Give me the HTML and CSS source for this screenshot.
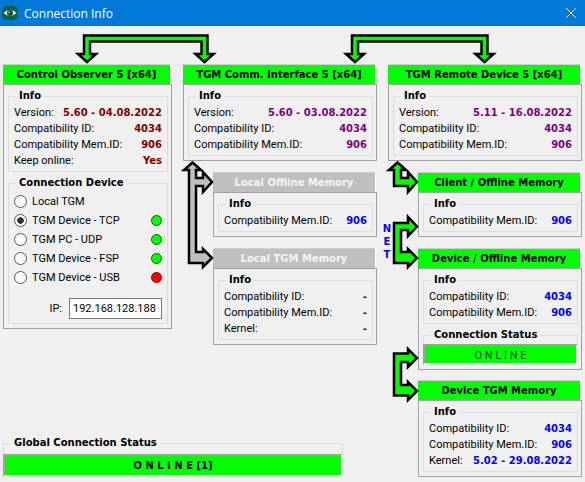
FILE: index.html
```html
<!DOCTYPE html>
<html lang="en">

<head>
    <meta charset="UTF-8">
    <meta name="viewport" content="width=device-width, initial-scale=1.0">
    <title>Connection Info</title>
    <link rel="stylesheet" href="styles.css">
</head>

<body>

    <div class="window">
        <div class="titlebar">
            <svg class="app-icon" width="16" height="14" viewBox="0 0 16 14">
                <rect x="0" y="0" width="16" height="14" rx="5" fill="#0f5f45" />
                <path d="M1.5 7 Q8 1 14.5 7 Q8 13 1.5 7 Z" fill="#fff" />
                <circle cx="8" cy="7" r="3" fill="#0f4f3c" />
                <circle cx="7.2" cy="6.2" r="0.8" fill="#cfe8df" />
            </svg>
            <span class="title-text">Connection Info</span>
            <svg class="close-icon" width="10" height="10" viewBox="0 0 10 10">
                <path d="M0 0 L10 10 M10 0 L0 10" stroke="#fff" stroke-width="1" fill="none" />
            </svg>
        </div>

        <div class="content">
            <div class="left">
                <div class="top-row">
                    <!-- Control Observer -->
                    <div class="col col-observer">
                        <h2 class="header">Control Observer 5 [x64]</h2>
                        <div class="panel">
                            <fieldset class="group">
                                <legend>Info</legend>
                                <div class="row"><span>Version:</span><b class="maroon">5.60 - 04.08.2022</b></div>
                                <div class="row"><span>Compatibility ID:</span><b class="maroon">4034</b></div>
                                <div class="row"><span>Compatibility Mem.ID:</span><b class="maroon">906</b></div>
                                <div class="row"><span>Keep online:</span><b class="maroon">Yes</b></div>
                            </fieldset>
                            <fieldset class="group device-group">
                                <legend>Connection Device</legend>
                                <label class="radio-row"><input type="radio" name="device"><span>Local TGM</span></label>
                                <label class="radio-row"><input type="radio" name="device" checked><span>TGM Device - TCP</span><i class="led"></i></label>
                                <label class="radio-row"><input type="radio" name="device"><span>TGM PC - UDP</span><i class="led"></i></label>
                                <label class="radio-row"><input type="radio" name="device"><span>TGM Device - FSP</span><i class="led"></i></label>
                                <label class="radio-row"><input type="radio" name="device"><span>TGM Device - USB</span><i class="led led-red"></i></label>
                                <div class="ip-row"><span>IP:</span><input class="ip-input" type="text" value="192.168.128.188"></div>
                            </fieldset>
                        </div>
                    </div>

                    <!-- TGM Comm. Interface -->
                    <div class="col">
                        <h2 class="header">TGM Comm. Interface 5 [x64]</h2>
                        <div class="panel">
                            <fieldset class="group">
                                <legend>Info</legend>
                                <div class="row"><span>Version:</span><b class="purple">5.60 - 03.08.2022</b></div>
                                <div class="row"><span>Compatibility ID:</span><b class="purple">4034</b></div>
                                <div class="row"><span>Compatibility Mem.ID:</span><b class="purple">906</b></div>
                            </fieldset>
                        </div>
                        <div class="sub">
                            <h2 class="header header-off">Local Offline Memory</h2>
                            <div class="panel">
                                <fieldset class="group">
                                    <legend>Info</legend>
                                    <div class="row"><span>Compatibility Mem.ID:</span><b class="blue">906</b></div>
                                </fieldset>
                            </div>
                        </div>
                        <div class="sub">
                            <h2 class="header header-off">Local TGM Memory</h2>
                            <div class="panel">
                                <fieldset class="group">
                                    <legend>Info</legend>
                                    <div class="row"><span>Compatibility ID:</span><b class="blue">-</b></div>
                                    <div class="row"><span>Compatibility Mem.ID:</span><b class="blue">-</b></div>
                                    <div class="row"><span>Kernel:</span><b class="blue">-</b></div>
                                </fieldset>
                            </div>
                        </div>
                    </div>
                </div>

                <fieldset class="group global-group">
                    <legend>Global Connection Status</legend>
                    <div class="status status-global">O N L I N E [1]</div>
                </fieldset>
            </div>

            <!-- TGM Remote Device -->
            <div class="col">
                <h2 class="header">TGM Remote Device 5 [x64]</h2>
                <div class="panel">
                    <fieldset class="group">
                        <legend>Info</legend>
                        <div class="row"><span>Version:</span><b class="purple">5.11 - 16.08.2022</b></div>
                        <div class="row"><span>Compatibility ID:</span><b class="purple">4034</b></div>
                        <div class="row"><span>Compatibility Mem.ID:</span><b class="purple">906</b></div>
                    </fieldset>
                </div>
                <div class="sub">
                    <h2 class="header">Client / Offline Memory</h2>
                    <div class="panel">
                        <fieldset class="group">
                            <legend>Info</legend>
                            <div class="row"><span>Compatibility Mem.ID:</span><b class="blue">906</b></div>
                        </fieldset>
                    </div>
                </div>
                <div class="sub">
                    <h2 class="header">Device / Offline Memory</h2>
                    <div class="panel">
                        <fieldset class="group">
                            <legend>Info</legend>
                            <div class="row"><span>Compatibility ID:</span><b class="blue">4034</b></div>
                            <div class="row"><span>Compatibility Mem.ID:</span><b class="blue">906</b></div>
                        </fieldset>
                        <fieldset class="group status-group">
                            <legend>Connection Status</legend>
                            <div class="status">O N L I N E</div>
                        </fieldset>
                    </div>
                </div>
                <div class="sub sub-last">
                    <h2 class="header">Device TGM Memory</h2>
                    <div class="panel">
                        <fieldset class="group">
                            <legend>Info</legend>
                            <div class="row"><span>Compatibility ID:</span><b class="blue">4034</b></div>
                            <div class="row"><span>Compatibility Mem.ID:</span><b class="blue">906</b></div>
                            <div class="row"><span>Kernel:</span><b class="blue">5.02 - 29.08.2022</b></div>
                        </fieldset>
                    </div>
                </div>
            </div>
        </div>

        <!-- connector arrows lie over the panels -->
        <svg class="arrows" width="585" height="482" viewBox="0 0 585 482">
            <g fill="#00ff00" stroke="#000" stroke-width="2.5" stroke-miterlimit="10">
                <polygon points="84,54 84,35.5 207.5,35.5 207.5,54 213.5,54 204.5,62 195.5,54 201.5,54 201.5,41.5 90,41.5 90,54 96,54 87,62 78,54" />
                <polygon points="352,54 352,35.5 487.5,35.5 487.5,54 493.5,54 484.5,62 475.5,54 481.5,54 481.5,41.5 358,41.5 358,54 364,54 355,62 346,54" />
                <polygon points="397.5,162.5 406,170 401,170 401,178 408,178 408,172 417,182 408,192 408,186 394,186 394,170 389,170" />
                <polygon points="394,223 408,223 408,217 417,226.5 408,236 408,230 401,230 401,252 408,252 408,249 417,258 408,267 408,263 394,263" />
                <polygon points="394,353.5 408,353.5 408,349 417,358 408,367 408,362 401,362 401,385 408,385 408,382 417,391 408,400 408,395.5 394,395.5" />
            </g>
            <polygon fill="#c0c0c0" stroke="#000" stroke-width="2.5" stroke-miterlimit="10"
                points="192.5,162.5 201,170 196,170 196,178 203,178 203,172 212,182 203,192 203,186 196,186 196,252 203,252 203,249 212,258 203,267 203,263 189,263 189,170 184,170" />
        </svg>
        <div class="net"><span>N</span><span>E</span><span>T</span></div>
    </div>

</body>

</html>
```

FILE: styles.css
```css
body {
    font-family: Roboto, Arial, sans-serif;
    font-size: 11px;
    margin: 0;
    padding: 0;
    background-color: #f0f0f0;
    color: #000;
}

b,
.header,
.group legend,
.status-global,
.net {
    font-family: "DejaVu Sans", Verdana, sans-serif;
    font-size: 10px;
    font-weight: bold;
}

.window {
    position: relative;
    width: 585px;
    height: 482px;
    overflow: hidden;
}

.titlebar {
    display: flex;
    align-items: center;
    height: 26px;
    padding: 0 9px 0 2px;
    box-sizing: border-box;
    background-color: #0078d7;
    color: #fff;
}

.title-text {
    margin-left: 6px;
    font-family: "Open Sans", Arial, sans-serif;
    font-size: 12px;
}

.close-icon {
    margin-left: auto;
}

.content {
    display: flex;
    gap: 11px;
    height: 456px;
    padding: 38px 3px 5px;
    box-sizing: border-box;
}

.left {
    display: flex;
    flex-direction: column;
    width: 374px;
}

.top-row {
    display: flex;
    gap: 11px;
}

.col {
    width: 194px;
}

.col-observer {
    width: 169px;
}

.sub {
    margin: 11px 0 0 30px;
}

.sub-last {
    margin-top: 10px;
}

.header {
    height: 20px;
    margin: 0 1px 0 0;
    box-sizing: border-box;
    border-top: 1px solid #d0d0d0;
    border-right: 1px solid #fff;
    background-color: #00ff00;
    line-height: 20px;
    text-align: center;
}

.header-off {
    background-color: #bfbfbf;
    color: #f4f4f4;
}

.panel {
    padding: 4px 3px 4px 4px;
    border: 1px solid #a0a0a0;
}

.group {
    min-width: 0;
    margin: 0;
    padding: 2px 5px 2px;
    border: 1px solid #dcdcdc;
}

.group legend {
    margin-left: 2px;
    padding: 0 3px;
    line-height: 14px;
}

.row {
    display: flex;
    justify-content: space-between;
    height: 16px;
    line-height: 16px;
    white-space: nowrap;
}

.maroon {
    color: #800000;
}

.purple {
    color: #800080;
}

.blue {
    color: #0000ff;
}

.device-group {
    height: 148px;
    box-sizing: border-box;
    margin-top: 4px;
}

.radio-row {
    display: flex;
    align-items: center;
    height: 19px;
}

.radio-row input {
    appearance: none;
    width: 13px;
    height: 13px;
    margin: 0 5px 0 0;
    border: 1px solid #555;
    border-radius: 50%;
    background-color: #fff;
}

.radio-row input:checked {
    background: radial-gradient(circle, #333 0 3px, #fff 3.5px);
}

.led {
    width: 11px;
    height: 11px;
    margin-left: auto;
    box-sizing: border-box;
    border: 1px solid #006400;
    border-radius: 50%;
    background-color: #00ff00;
}

.led-red {
    border-color: #8b0000;
    background-color: #ff0000;
}

.ip-row {
    display: flex;
    justify-content: flex-end;
    align-items: center;
    gap: 7px;
    margin-top: 11px;
}

.ip-input {
    width: 93px;
    height: 21px;
    padding: 0 0 0 3px;
    box-sizing: border-box;
    border: 1px solid #7a7a7a;
    font-family: inherit;
    font-size: 11px;
}

.status-group {
    margin-top: 4px;
    padding: 2px 0 0;
    border-bottom: none;
}

.status-group legend,
.global-group legend {
    margin-left: 7px;
}

.status {
    height: 21px;
    margin: 0 -1px;
    box-sizing: border-box;
    border: 2px solid #fff;
    border-top-color: #a0a0a0;
    border-left-color: #a0a0a0;
    background-color: #00ff00;
    color: #004000;
    line-height: 19px;
    text-align: center;
}

.global-group {
    width: 340px;
    margin-top: auto;
    box-sizing: border-box;
    padding: 4px 0 0;
    border-bottom: none;
}

.status-global {
    height: 23px;
    line-height: 20px;
    color: #000;
}

.arrows {
    position: absolute;
    left: 0;
    top: 0;
    pointer-events: none;
}

.net {
    position: absolute;
    left: 381px;
    top: 222px;
    display: flex;
    flex-direction: column;
    width: 12px;
    color: #0000ff;
    line-height: 13px;
    text-align: center;
}
```
